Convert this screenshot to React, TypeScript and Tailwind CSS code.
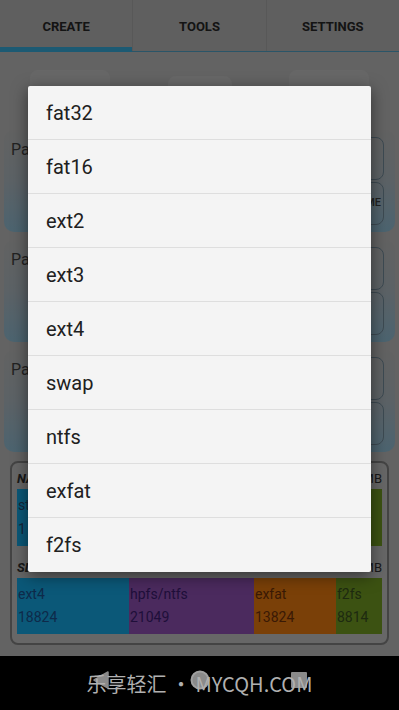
import React from "react";

const items = ["fat32", "fat16", "ext2", "ext3", "ext4", "swap", "ntfs", "exfat", "f2fs"];

function Card({ label, side }: { label: string; side?: string }) {
  return (
    <div className="relative h-[102px] rounded-[10px] bg-gradient-to-b from-[#c4c4c4] via-[#b8c4cc] to-[#98c8e0] mx-[4px]">
      <div className="absolute left-[7px] top-[8px] text-[16px] text-[#444]">{label}</div>
      <div className="absolute right-[11px] top-[7px] flex flex-col gap-[2px]">
        <div className="w-[34px] h-[43px] rounded-[8px] border border-[#7a94a4]" />
        <div className="w-[34px] h-[43px] rounded-[8px] border border-[#7a94a4] flex items-center justify-end pr-[2px] text-[11px] font-medium text-[#444]">
          {side}
        </div>
      </div>
    </div>
  );
}

export default function App() {
  return (
    <div
      className="relative w-[399px] h-[710px] overflow-hidden bg-black flex flex-col"
      style={{ fontFamily: "Roboto, 'Noto Sans', 'Noto Sans CJK SC', sans-serif" }}
    >
      <div className="relative h-[656px] bg-[#c6c6c6] flex flex-col">
        {/* tabs */}
        <div className="h-[52px] flex relative bg-[#bebebe]">
          <div className="flex-1 flex items-center justify-center text-[13px] font-bold text-[#282828] pt-[2px] border-r border-[#b0b0b0]">CREATE</div>
          <div className="flex-1 flex items-center justify-center text-[13px] font-bold text-[#282828] pt-[2px] border-r border-[#b0b0b0]">TOOLS</div>
          <div className="flex-1 flex items-center justify-center text-[13px] font-bold text-[#282828] pt-[2px]">SETTINGS</div>
          <div className="absolute left-0 right-0 bottom-0 h-[1px] bg-[#54aad0]" />
          <div className="absolute left-0 bottom-0 w-[132px] h-[5px] bg-[#38b4e6]" />
        </div>

        {/* content */}
        <div className="h-[78px] flex justify-between items-start px-[30px] pt-[18px]">
          <div className="w-[80px] h-[36px] rounded-[8px] bg-[#cfcfcf]" />
          <div className="w-[64px] h-[30px] rounded-[8px] bg-[#d0d0d0] mt-[6px]" />
          <div className="w-[80px] h-[36px] rounded-[8px] bg-[#cfcfcf]" />
        </div>
        <div className="flex flex-col gap-[8px]">
          <Card label="Partition" side="NAME" />
          <Card label="Partition" />
          <Card label="Partition" />
        </div>
        <div className="mx-[10px] mt-[9px] h-[184px] rounded-[8px] border-2 border-[#888] bg-[#cecece] px-[5px] pt-[6px] flex flex-col">
          <div className="flex justify-between text-[13px] text-[#333] h-[20px] items-center">
            <span className="italic font-bold">NAND</span>
            <span>MB</span>
          </div>
          <div className="h-[57px] flex text-[14px] text-[#2a4c74]">
            <div className="w-[300px] bg-[#16b0f0] flex flex-col justify-between py-[6px] pl-[1px]">
              <span>st</span>
              <span>1</span>
            </div>
            <div className="w-[44px] bg-[#cecece]" />
            <div className="flex-1 bg-[#78a424]" />
          </div>
          <div className="flex justify-between text-[13px] text-[#333] h-[20px] items-center mt-[12px]">
            <span className="italic font-bold">SD</span>
            <span>MB</span>
          </div>
          <div className="h-[56px] flex text-[14px]">
            <div className="w-[112px] bg-[#16b0f0] text-[#1c5494] flex flex-col justify-between py-[6px] pl-[1px]">
              <span>ext4</span>
              <span>18824</span>
            </div>
            <div className="w-[125px] bg-[#9654bc] text-[#3e1e74] flex flex-col justify-between py-[6px] pl-[1px]">
              <span>hpfs/ntfs</span>
              <span>21049</span>
            </div>
            <div className="w-[82px] bg-[#f48010] text-[#74340a] flex flex-col justify-between py-[6px] pl-[1px]">
              <span>exfat</span>
              <span>13824</span>
            </div>
            <div className="flex-1 bg-[#78a424] text-[#3c5420] flex flex-col justify-between py-[6px] pl-[1px]">
              <span>f2fs</span>
              <span>8814</span>
            </div>
          </div>
        </div>

        {/* dim overlay */}
        <div className="absolute inset-0 bg-black/50" />
      </div>

      {/* nav bar */}
      <div className="h-[54px] bg-black relative flex items-center justify-center">
        <div className="absolute inset-0 flex items-center justify-center gap-[77px] pb-[6px]">
          <svg width="22" height="22" viewBox="0 0 22 22">
            <path d="M18 3 L18 19 L4 11 Z" fill="#8a8a8a" stroke="#8a8a8a" strokeWidth="1.5" strokeLinejoin="round" />
          </svg>
          <svg width="22" height="22" viewBox="0 0 22 22">
            <circle cx="11" cy="11" r="8.5" fill="#8a8a8a" stroke="#a0a0a0" strokeWidth="2" />
          </svg>
          <svg width="22" height="22" viewBox="0 0 22 22">
            <rect x="3" y="3" width="16" height="16" rx="1" fill="#8a8a8a" />
          </svg>
        </div>
        <div className="relative text-[20px] text-[#b0b0b0] whitespace-nowrap pt-[2px]" style={{ fontFamily: "'Noto Sans CJK SC', 'Noto Sans', sans-serif" }}>
          乐享轻汇 • MYCQH.COM
        </div>
      </div>

      {/* dialog */}
      <div className="absolute left-[28px] top-[86px] w-[343px] bg-[#f4f4f4] rounded-[2px] shadow-[0_4px_16px_rgba(0,0,0,0.5)]">
        {items.map((it, i) => (
          <div
            key={it}
            className={
              "h-[54px] flex items-center pl-[18px] text-[20px] text-[#202020] " +
              (i < items.length - 1 ? "border-b border-[#dedede]" : "")
            }
          >
            {it}
          </div>
        ))}
      </div>
    </div>
  );
}
